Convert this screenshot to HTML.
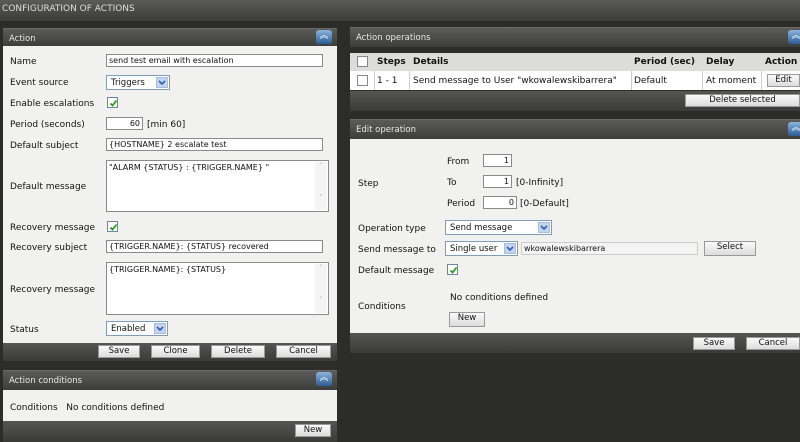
<!DOCTYPE html>
<html><head><style>
*{margin:0;padding:0;box-sizing:border-box}
body{width:800px;height:442px;background:#2c2c2a;font-family:"DejaVu Sans","Liberation Sans",sans-serif;font-size:9px;color:#111;position:relative;overflow:hidden}
.a{position:absolute;white-space:nowrap}
.top{left:0;top:0;width:800px;height:21px;background:linear-gradient(#5a5a58,#3c3c3a);color:#ddd;font-size:9px;padding:4px 0 0 2px}
.hd{background:linear-gradient(#5b5b59,#3d3d3b);color:#e8e8e8;font-size:8.5px;padding:5px 0 0 6px;border-top:1px solid #6a6a68}
.bd{background:#f1f1ef}
.ft{background:linear-gradient(#555553,#3a3a38)}
.inp{background:#fff;border:1px solid #8a8a8a;font-size:8px;padding:1px 2px;height:13px;line-height:10px}
.btn{background:linear-gradient(#fafafa,#dcdcdc);border:1px solid #999;font-size:8.5px;text-align:center;height:13px;line-height:11px}
.cb{width:11px;height:11px;border:1px solid #6c86a8;background:#fff}
.cb svg{position:absolute;left:1px;top:1px}
.sel{background:#fff;border:1px solid #7f9db9;font-size:8.5px;padding:1px 4px;height:15px;line-height:12px}
.sel i{position:absolute;right:1px;top:1px;width:12px;height:11px;background:#c4d3ee;border:1px solid #a9bde0}
.sel i svg{position:absolute;left:1px;top:1px}
.ic{position:absolute;width:16px;height:14px;border-radius:3px;background:linear-gradient(#8db4dc,#2a5d96);color:#fff;font-size:9px;text-align:center;line-height:13px}
.ta{background:#fff;border:1px solid #8a8a8a;font-size:8px;padding:2px 2px}
.sb{position:absolute;right:1px;top:1px;bottom:1px;width:12px;background:#f4f4f4;color:#bbb;font-size:7px;text-align:center}
.l{top:1px}
</style></head><body>
<div class="a top">CONFIGURATION OF ACTIONS</div>

<div class="a hd" style="left:3px;top:28px;width:334px;height:18px">Action</div>
<div class="ic" style="left:316px;top:30px">︽</div>
<div class="a bd" style="left:3px;top:46px;width:334px;height:297px"></div>
<div class="a" style="left:10px;top:57px">Name</div>
<div class="a inp" style="left:106px;top:54px;width:217px">send test email with escalation</div>
<div class="a" style="left:10px;top:78px">Event source</div>
<div class="a sel" style="left:106px;top:75px;width:64px">Triggers<i><svg width="8" height="7"><path d="M1 2l3 3 3-3" stroke="#2f5fb0" stroke-width="1.6" fill="none"/></svg></i></div>
<div class="a" style="left:10px;top:99px">Enable escalations</div>
<div class="a cb" style="left:107px;top:97px"><svg width="9" height="9"><path d="M1.5 4.5l2 2 4-5" stroke="#21a121" stroke-width="1.8" fill="none"/></svg></div>
<div class="a" style="left:10px;top:120px">Period (seconds)</div>
<div class="a inp" style="left:106px;top:117px;width:37px;text-align:right">60</div>
<div class="a" style="left:147px;top:120px">[min 60]</div>
<div class="a" style="left:10px;top:141px">Default subject</div>
<div class="a inp" style="left:106px;top:138px;width:217px">{HOSTNAME} 2 escalate test</div>
<div class="a" style="left:10px;top:182px">Default message</div>
<div class="a ta" style="left:106px;top:160px;width:223px;height:52px">"ALARM {STATUS} : {TRIGGER.NAME} "<div class="sb">˄<br><br><br><br>˅</div></div>
<div class="a" style="left:10px;top:223px">Recovery message</div>
<div class="a cb" style="left:107px;top:221px"><svg width="9" height="9"><path d="M1.5 4.5l2 2 4-5" stroke="#21a121" stroke-width="1.8" fill="none"/></svg></div>
<div class="a" style="left:10px;top:243px">Recovery subject</div>
<div class="a inp" style="left:106px;top:240px;width:217px">{TRIGGER.NAME}: {STATUS} recovered</div>
<div class="a" style="left:10px;top:285px">Recovery message</div>
<div class="a ta" style="left:106px;top:262px;width:223px;height:53px">{TRIGGER.NAME}: {STATUS}<div class="sb">˄<br><br><br><br>˅</div></div>
<div class="a" style="left:10px;top:325px">Status</div>
<div class="a sel" style="left:106px;top:321px;width:62px">Enabled<i><svg width="8" height="7"><path d="M1 2l3 3 3-3" stroke="#2f5fb0" stroke-width="1.6" fill="none"/></svg></i></div>
<div class="a ft" style="left:3px;top:343px;width:334px;height:18px"></div>
<div class="a btn" style="left:98px;top:345px;width:42px">Save</div>
<div class="a btn" style="left:151px;top:345px;width:49px">Clone</div>
<div class="a btn" style="left:211px;top:345px;width:54px">Delete</div>
<div class="a btn" style="left:276px;top:345px;width:55px">Cancel</div>

<div class="a hd" style="left:3px;top:370px;width:334px;height:20px">Action conditions</div>
<div class="ic" style="left:316px;top:372px">︽</div>
<div class="a bd" style="left:3px;top:390px;width:334px;height:31px"></div>
<div class="a" style="left:10px;top:403px">Conditions&nbsp;&nbsp;&nbsp;No conditions defined</div>
<div class="a ft" style="left:3px;top:421px;width:334px;height:21px"></div>
<div class="a btn" style="left:295px;top:424px;width:36px">New</div>

<div class="a hd" style="left:350px;top:27px;width:450px;height:20px">Action operations</div>
<div class="ic" style="left:788px;top:30px">︽</div>
<div class="a" style="left:350px;top:53px;width:450px;height:18px;background:#dcdcda"></div>
<div class="a" style="left:350px;top:71px;width:450px;height:19px;background:#fff"></div>
<div class="a cb" style="left:357px;top:56px;border-color:#7f8a99"></div>
<div class="a cb" style="left:357px;top:75px;border-color:#7f8a99"></div>
<div class="a" style="left:377px;top:57px;font-weight:bold">Steps</div>
<div class="a" style="left:413px;top:57px;font-weight:bold">Details</div>
<div class="a" style="left:634px;top:57px;font-weight:bold">Period (sec)</div>
<div class="a" style="left:706px;top:57px;font-weight:bold">Delay</div>
<div class="a" style="left:765px;top:57px;font-weight:bold">Action</div>
<div class="a" style="left:374px;top:71px;width:1px;height:19px;background:#ccc"></div>
<div class="a" style="left:409px;top:71px;width:1px;height:19px;background:#ccc"></div>
<div class="a" style="left:631px;top:71px;width:1px;height:19px;background:#ccc"></div>
<div class="a" style="left:702px;top:71px;width:1px;height:19px;background:#ccc"></div>
<div class="a" style="left:761px;top:71px;width:1px;height:19px;background:#ccc"></div>
<div class="a" style="left:377px;top:76px">1 - 1</div>
<div class="a" style="left:413px;top:76px">Send message to User "wkowalewskibarrera"</div>
<div class="a" style="left:634px;top:76px">Default</div>
<div class="a" style="left:706px;top:76px">At moment</div>
<div class="a btn" style="left:767px;top:74px;width:33px">Edit</div>
<div class="a ft" style="left:350px;top:91px;width:450px;height:20px"></div>
<div class="a btn" style="left:685px;top:94px;width:115px">Delete selected</div>

<div class="a hd" style="left:350px;top:119px;width:450px;height:20px">Edit operation</div>
<div class="ic" style="left:788px;top:122px">︽</div>
<div class="a bd" style="left:350px;top:139px;width:450px;height:194px"></div>
<div class="a" style="left:447px;top:157px">From</div>
<div class="a inp" style="left:483px;top:154px;width:29px;text-align:right">1</div>
<div class="a" style="left:358px;top:179px">Step</div>
<div class="a" style="left:447px;top:178px">To</div>
<div class="a inp" style="left:483px;top:175px;width:29px;text-align:right">1</div>
<div class="a" style="left:516px;top:178px">[0-Infinity]</div>
<div class="a" style="left:447px;top:199px">Period</div>
<div class="a inp" style="left:483px;top:196px;width:34px;text-align:right">0</div>
<div class="a" style="left:520px;top:199px">[0-Default]</div>
<div class="a" style="left:358px;top:224px">Operation type</div>
<div class="a sel" style="left:445px;top:220px;width:107px">Send message<i><svg width="8" height="7"><path d="M1 2l3 3 3-3" stroke="#2f5fb0" stroke-width="1.6" fill="none"/></svg></i></div>
<div class="a" style="left:358px;top:245px">Send message to</div>
<div class="a sel" style="left:445px;top:241px;width:73px">Single user<i><svg width="8" height="7"><path d="M1 2l3 3 3-3" stroke="#2f5fb0" stroke-width="1.6" fill="none"/></svg></i></div>
<div class="a inp" style="left:521px;top:242px;width:177px;background:#f4f4f4;border-color:#ccc">wkowalewskibarrera</div>
<div class="a btn" style="left:704px;top:241px;width:52px;height:15px">Select</div>
<div class="a" style="left:358px;top:266px">Default message</div>
<div class="a cb" style="left:447px;top:264px"><svg width="9" height="9"><path d="M1.5 4.5l2 2 4-5" stroke="#21a121" stroke-width="1.8" fill="none"/></svg></div>
<div class="a" style="left:450px;top:293px">No conditions defined</div>
<div class="a" style="left:358px;top:302px">Conditions</div>
<div class="a btn" style="left:449px;top:312px;width:36px;height:15px">New</div>
<div class="a ft" style="left:350px;top:333px;width:450px;height:20px"></div>
<div class="a btn" style="left:693px;top:337px;width:42px">Save</div>
<div class="a btn" style="left:746px;top:337px;width:54px">Cancel</div>
</body></html>
